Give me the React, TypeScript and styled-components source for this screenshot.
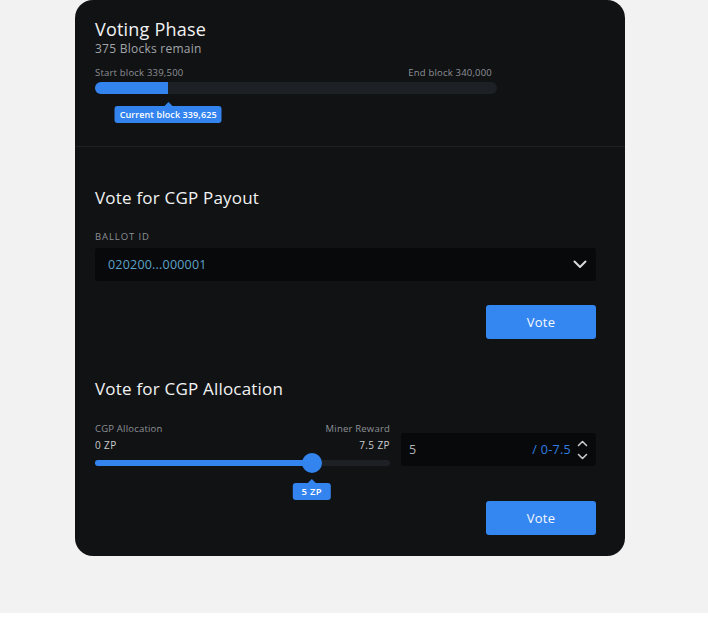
import React from "react";
import styled, { createGlobalStyle } from "styled-components";

const Global = createGlobalStyle`
  html, body { margin: 0; padding: 0; background: #ffffff; }
  body { font-family: "Open Sans", "Noto Sans", sans-serif; -webkit-font-smoothing: antialiased; }
`;

const Backdrop = styled.div`
  height: 613px;
  background: #f2f2f2;
  box-shadow: 0 8px 18px rgba(0, 0, 0, 0.05);
  padding-left: 75px;
`;

const Card = styled.div`
  width: 550px;
  height: 556px;
  background: #111214;
  border-radius: 18px;
  display: flex;
  flex-direction: column;
`;

const PhaseSection = styled.section`
  height: 147px;
  box-sizing: border-box;
  padding: 17px 20px 0;
  border-bottom: 1px solid #1d1f22;
  display: flex;
  flex-direction: column;
`;

const VoteSection = styled.section`
  padding: 0 29px 0 20px;
  display: flex;
  flex-direction: column;
`;

const Title = styled.h2<{ $top?: number }>`
  margin: ${(p) => p.$top ?? 0}px 0 0;
  font-size: 17px;
  line-height: 22px;
  font-weight: 400;
  color: #f1f2f3;
  letter-spacing: 0.2px;
`;

const BigTitle = styled(Title)`
  font-size: 18px;
  line-height: 24px;
`;

const Sub = styled.div`
  font-size: 12px;
  line-height: 16px;
  color: #a1a5aa;
  letter-spacing: 0.25px;
`;

const BarBlock = styled.div`
  width: 402px;
  margin-top: 9px;
  display: flex;
  flex-direction: column;
`;

const SmallRow = styled.div`
  display: flex;
  justify-content: space-between;
  font-size: 9.5px;
  line-height: 14px;
  color: #8d9196;
  letter-spacing: 0.2px;
`;

const BarLabels = styled(SmallRow)`
  padding-right: 5px;
`;

const Track = styled.div`
  position: relative;
  margin-top: 2px;
  height: 12px;
  border-radius: 6px;
  background: #1d2125;
`;

const Fill = styled.div`
  height: 100%;
  border-radius: 6px 0 0 6px;
  background: #3384ef;
`;

const Tip = styled.div`
  position: absolute;
  transform: translateX(-50%);
  background: #3384ef;
  color: #ffffff;
  font-weight: 600;
  border-radius: 3px;
  white-space: nowrap;
  &::before {
    content: "";
    position: absolute;
    left: 50%;
    top: -4px;
    margin-left: -4px;
    border-left: 4px solid transparent;
    border-right: 4px solid transparent;
    border-bottom: 4px solid #3384ef;
  }
`;

const BlockTip = styled(Tip)`
  top: 24px;
  font-size: 9px;
  line-height: 17px;
  padding: 0 5px;
  letter-spacing: 0.1px;
`;

const Label = styled.div`
  margin-top: 21px;
  font-size: 9.5px;
  line-height: 14px;
  letter-spacing: 0.9px;
  color: #8b8f94;
  text-transform: uppercase;
`;

const Field = styled.div<{ $top?: number }>`
  margin-top: ${(p) => p.$top ?? 0}px;
  height: 33px;
  box-sizing: border-box;
  background: #08090a;
  border-radius: 3px;
  display: flex;
  align-items: center;
  padding: 0 9px 0 13px;
`;

const SelectValue = styled.span`
  flex: 1;
  font-size: 12.5px;
  color: #5ea3c9;
  letter-spacing: 0.2px;
`;

const InputValue = styled.span`
  flex: 1;
  font-size: 12.5px;
  color: #b3b6ba;
`;

const Range = styled.span`
  font-size: 12.5px;
  color: #2f7fe3;
  margin-right: 6px;
  letter-spacing: 0.3px;
`;

const ButtonRow = styled.div<{ $top: number }>`
  margin-top: ${(p) => p.$top}px;
  display: flex;
  justify-content: flex-end;
`;

const VoteButton = styled.button`
  width: 110px;
  height: 34px;
  border: none;
  border-radius: 3px;
  background: #3486f0;
  color: #f4f8ff;
  font-family: inherit;
  font-size: 13px;
  letter-spacing: 0.3px;
  cursor: pointer;
`;

const AllocRow = styled.div`
  margin-top: 22px;
  display: flex;
  align-items: flex-start;
  gap: 11px;
`;

const SliderCol = styled.div`
  width: 295px;
  display: flex;
  flex-direction: column;
`;

const ValueRow = styled(SmallRow)`
  margin-top: 2px;
  font-size: 10px;
  color: #c9cbce;
  font-weight: 500;
  letter-spacing: 0.4px;
`;

const SliderArea = styled.div`
  position: relative;
  height: 20px;
  margin-top: 1px;
  display: flex;
  align-items: center;
`;

const SliderTrack = styled.div`
  width: 100%;
  height: 6px;
  border-radius: 3px;
  background: #1d2125;
  overflow: hidden;
`;

const SliderFill = styled.div`
  height: 100%;
  background: #3384ef;
`;

const Thumb = styled.div`
  position: absolute;
  top: 0;
  width: 20px;
  height: 20px;
  margin-left: -10px;
  border-radius: 50%;
  background: #3384ef;
`;

const ValueTip = styled(Tip)`
  top: 30px;
  font-size: 9.5px;
  line-height: 17px;
  padding: 0 9px;
  letter-spacing: 0.3px;
`;

const InputField = styled(Field)`
  flex: 1;
  margin-top: 11px;
  padding: 0 8px 0 8px;
`;

const Chevron = () => (
  <svg width="14" height="9" viewBox="0 0 14 9" fill="none">
    <path d="M1.5 1.5 L7 7 L12.5 1.5" stroke="#d7dadd" strokeWidth="2" strokeLinecap="round" strokeLinejoin="round" />
  </svg>
);

const Spinner = () => (
  <svg width="11" height="22" viewBox="0 0 11 22" fill="none">
    <path d="M1.5 6.5 L5.5 2.5 L9.5 6.5" stroke="#c9ccd0" strokeWidth="1.6" strokeLinecap="round" strokeLinejoin="round" />
    <path d="M1.5 15.5 L5.5 19.5 L9.5 15.5" stroke="#c9ccd0" strokeWidth="1.6" strokeLinecap="round" strokeLinejoin="round" />
  </svg>
);

export default function App() {
  const progress = 18.2;
  const slider = 73.5;
  return (
    <>
      <Global />
      <Backdrop>
        <Card>
          <PhaseSection>
            <BigTitle>Voting Phase</BigTitle>
            <Sub>375 Blocks remain</Sub>
            <BarBlock>
              <BarLabels>
                <span>Start block 339,500</span>
                <span>End block 340,000</span>
              </BarLabels>
              <Track>
                <Fill style={{ width: `${progress}%` }} />
                <BlockTip style={{ left: `${progress}%` }}>Current block 339,625</BlockTip>
              </Track>
            </BarBlock>
          </PhaseSection>

          <VoteSection>
            <Title $top={40}>Vote for CGP Payout</Title>
            <Label>Ballot ID</Label>
            <Field $top={4}>
              <SelectValue>020200...000001</SelectValue>
              <Chevron />
            </Field>
            <ButtonRow $top={24}>
              <VoteButton>Vote</VoteButton>
            </ButtonRow>

            <Title $top={39}>Vote for CGP Allocation</Title>
            <AllocRow>
              <SliderCol>
                <SmallRow>
                  <span>CGP Allocation</span>
                  <span>Miner Reward</span>
                </SmallRow>
                <ValueRow>
                  <span>0 ZP</span>
                  <span>7.5 ZP</span>
                </ValueRow>
                <SliderArea>
                  <SliderTrack>
                    <SliderFill style={{ width: `${slider}%` }} />
                  </SliderTrack>
                  <Thumb style={{ left: `${slider}%` }} />
                  <ValueTip style={{ left: `${slider}%` }}>5 ZP</ValueTip>
                </SliderArea>
              </SliderCol>
              <InputField>
                <InputValue>5</InputValue>
                <Range>/ 0-7.5</Range>
                <Spinner />
              </InputField>
            </AllocRow>
            <ButtonRow $top={28}>
              <VoteButton>Vote</VoteButton>
            </ButtonRow>
          </VoteSection>
        </Card>
      </Backdrop>
    </>
  );
}
